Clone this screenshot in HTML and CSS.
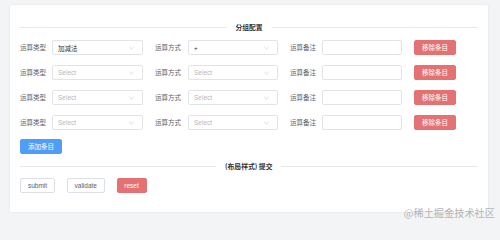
FILE: index.html
```html
<!DOCTYPE html>
<html lang="zh">
<head>
<meta charset="utf-8">
<title>分组配置</title>
<link rel="stylesheet" href="styles.css">
</head>
<body>
<div class="card">
  <div class="divider"><span class="line"></span><span class="divider-text">分组配置</span><span class="line"></span></div>

  <div class="row">
    <div class="item"><span class="label">运算类型</span><div class="select s1"><span class="value">加减法</span><svg class="arrow" viewBox="0 0 6 4"><path d="M0.5 0.8 L3 3.2 L5.5 0.8" fill="none" stroke="#b8bbc2" stroke-width="0.7"/></svg></div></div>
    <div class="item"><span class="label">运算方式</span><div class="select s2"><span class="value">+</span><svg class="arrow" viewBox="0 0 6 4"><path d="M0.5 0.8 L3 3.2 L5.5 0.8" fill="none" stroke="#b8bbc2" stroke-width="0.7"/></svg></div></div>
    <div class="item"><span class="label">运算备注</span><div class="input"></div></div>
    <button class="btn danger">移除条目</button>
  </div>

  <div class="row">
    <div class="item"><span class="label">运算类型</span><div class="select s1"><span class="placeholder">Select</span><svg class="arrow" viewBox="0 0 6 4"><path d="M0.5 0.8 L3 3.2 L5.5 0.8" fill="none" stroke="#b8bbc2" stroke-width="0.7"/></svg></div></div>
    <div class="item"><span class="label">运算方式</span><div class="select s2"><span class="placeholder">Select</span><svg class="arrow" viewBox="0 0 6 4"><path d="M0.5 0.8 L3 3.2 L5.5 0.8" fill="none" stroke="#b8bbc2" stroke-width="0.7"/></svg></div></div>
    <div class="item"><span class="label">运算备注</span><div class="input"></div></div>
    <button class="btn danger">移除条目</button>
  </div>

  <div class="row">
    <div class="item"><span class="label">运算类型</span><div class="select s1"><span class="placeholder">Select</span><svg class="arrow" viewBox="0 0 6 4"><path d="M0.5 0.8 L3 3.2 L5.5 0.8" fill="none" stroke="#b8bbc2" stroke-width="0.7"/></svg></div></div>
    <div class="item"><span class="label">运算方式</span><div class="select s2"><span class="placeholder">Select</span><svg class="arrow" viewBox="0 0 6 4"><path d="M0.5 0.8 L3 3.2 L5.5 0.8" fill="none" stroke="#b8bbc2" stroke-width="0.7"/></svg></div></div>
    <div class="item"><span class="label">运算备注</span><div class="input"></div></div>
    <button class="btn danger">移除条目</button>
  </div>

  <div class="row">
    <div class="item"><span class="label">运算类型</span><div class="select s1"><span class="placeholder">Select</span><svg class="arrow" viewBox="0 0 6 4"><path d="M0.5 0.8 L3 3.2 L5.5 0.8" fill="none" stroke="#b8bbc2" stroke-width="0.7"/></svg></div></div>
    <div class="item"><span class="label">运算方式</span><div class="select s2"><span class="placeholder">Select</span><svg class="arrow" viewBox="0 0 6 4"><path d="M0.5 0.8 L3 3.2 L5.5 0.8" fill="none" stroke="#b8bbc2" stroke-width="0.7"/></svg></div></div>
    <div class="item"><span class="label">运算备注</span><div class="input"></div></div>
    <button class="btn danger">移除条目</button>
  </div>

  <div class="add-row"><button class="btn primary">添加条目</button></div>

  <div class="divider divider-2"><span class="line"></span><span class="divider-text">(布局样式) 提交</span><span class="line"></span></div>

  <div class="actions">
    <button class="btn plain">submit</button>
    <button class="btn plain">validate</button>
    <button class="btn danger">reset</button>
  </div>
</div>
<div class="watermark">@稀土掘金技术社区</div>
</body>
</html>
```

FILE: styles.css
```css
html {
  margin: 0;
  padding: 0;
  width: 500px;
  height: 223px;
  overflow: hidden;
  background: #f3f4f6;
}
body {
  margin: 0;
  width: 500px;
  height: 223px;
  background: #f3f4f6;
  font-family: "Liberation Sans", "Noto Sans CJK SC", sans-serif;
  position: relative;
  overflow: hidden;
  padding: 5px 0 0 0;
  box-sizing: border-box;
}
.card {
  margin-left: 10px;
  width: 478px;
  height: 207px;
  box-sizing: border-box;
  background: #ffffff;
  border-radius: 2px;
  box-shadow: 0 0 3px rgba(0, 0, 0, 0.08);
  padding: 17px 10px 0 10px;
}
.divider {
  display: flex;
  align-items: center;
  height: 10px;
  gap: 8px;
  margin-bottom: 8px;
}
.line {
  flex: 1;
  height: 1px;
  background: #e6e8eb;
}
.divider-text {
  font-family: "Noto Sans CJK SC", sans-serif;
  font-size: 6.8px;
  font-weight: 700;
  color: #303133;
  padding: 0 1px;
}
.divider-2 {
  margin-top: 7px;
  margin-bottom: 7px;
}
.divider-2 .line:first-child {
  flex: 0 0 196px;
}
.row {
  display: flex;
  align-items: center;
  height: 15px;
  margin-bottom: 10px;
}
.item {
  display: flex;
  align-items: center;
  margin-right: 12px;
}
.label {
  width: 32px;
  font-family: "Noto Sans CJK SC", sans-serif;
  font-size: 6.5px;
  color: #606266;
  line-height: 15px;
}
.item:nth-child(2) .label {
  width: 33px;
}
.select, .input {
  height: 15px;
  box-sizing: border-box;
  border: 1px solid #e0e3e8;
  border-radius: 2px;
  display: flex;
  align-items: center;
  padding: 0 5px;
  font-size: 6.5px;
  background: #fff;
}
.s1 { width: 91px; }
.s2 { width: 90px; }
.input { width: 80px; }
.value {
  flex: 1;
  color: #303133;
  font-family: "Noto Sans CJK SC", sans-serif;
}
.placeholder {
  flex: 1;
  color: #b5b8bf;
}
.arrow {
  width: 5px;
  height: 4px;
  margin-right: 3px;
}
.btn {
  height: 15px;
  box-sizing: border-box;
  border-radius: 2px;
  font-family: "Liberation Sans", "Noto Sans CJK SC", sans-serif;
  font-size: 6.5px;
  padding: 0 7.5px;
  line-height: 13px;
  cursor: pointer;
  margin: 0;
}
.danger {
  background: #e47272;
  border: 1px solid #e47272;
  color: #ffffff;
}
.row .danger {
  width: 42px;
  padding: 0;
}
.primary {
  background: #4f9cf9;
  border: 1px solid #4f9cf9;
  color: #ffffff;
  width: 42px;
  padding: 0;
}
.plain {
  background: #ffffff;
  border: 1px solid #dcdfe6;
  color: #606266;
}
.add-row {
  margin-top: -1px;
  display: flex;
}
.actions {
  display: flex;
  gap: 11.5px;
}
.actions .btn:nth-child(1) { width: 35px; padding: 0; }
.actions .btn:nth-child(2) { width: 38.5px; padding: 0; }
.actions .btn:nth-child(3) { width: 30px; padding: 0; }
.watermark {
  position: absolute;
  right: 5px;
  bottom: 4px;
  font-family: "Noto Sans CJK SC", sans-serif;
  font-size: 10.2px;
  color: #b4b4b4;
  line-height: 13px;
}
```
